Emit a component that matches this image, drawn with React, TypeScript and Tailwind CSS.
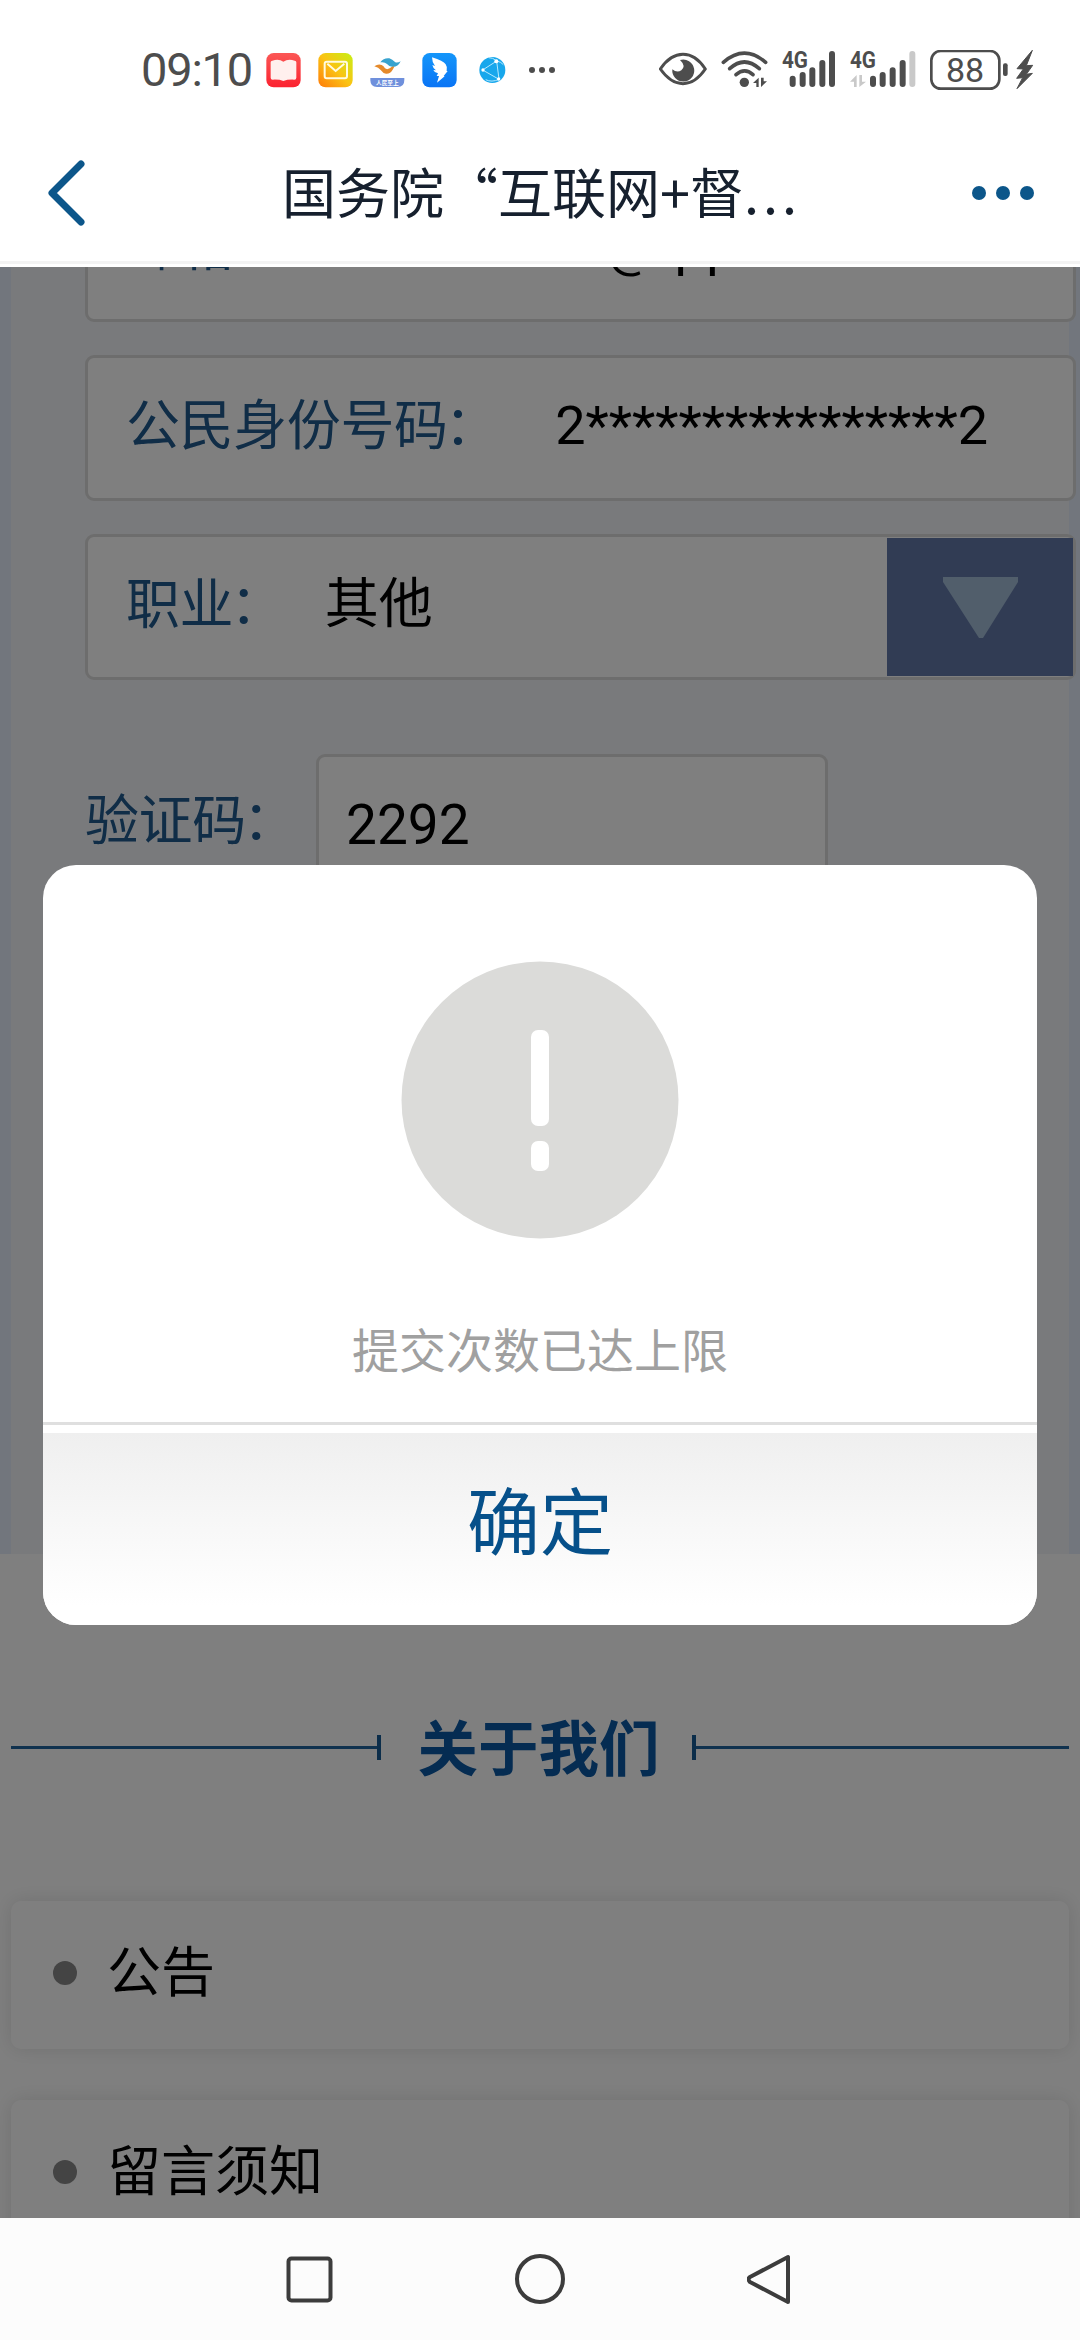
import * as React from "react"
import { clsx } from "clsx"

interface FieldProps {
  label: string
  value: string
  valueClassName?: string
  children?: React.ReactNode
}

const NOTICES: ReadonlyArray<string> = ["公告", "留言须知"]

function AppIcons() {
  return (
    <div className="flex h-10 items-center">
      {/* Reader */}
      <svg className="ml-4 h-10 w-[35px] shrink-0" viewBox="437 60 105 120">
        <defs>
          <linearGradient id="reader" x1="0" y1="0" x2="0" y2="1">
            <stop offset="0" stopColor="#fb5755" />
            <stop offset="1" stopColor="#fb2230" />
          </linearGradient>
        </defs>
        <rect x="438" y="69" width="103" height="103" rx="22" fill="url(#reader)" />
        <path
          d="M451 97q0-5 5-5 20-6 33 3 14-9 34-3 5 0 5 5v46q0 6-6 6-20-1-33 4-12-5-32-4-6 0-6-6z"
          fill="#fff0ee"
        />
      </svg>
      {/* Mail */}
      <svg className="ml-[17px] h-10 w-[35px] shrink-0" viewBox="592 60 105 120">
        <defs>
          <linearGradient id="mail" x1="0" y1="1" x2="1" y2="0">
            <stop offset="0" stopColor="#ff7a08" />
            <stop offset="0.5" stopColor="#fbc313" />
            <stop offset="1" stopColor="#c6f015" />
          </linearGradient>
        </defs>
        <rect x="593" y="69" width="103" height="103" rx="22" fill="url(#mail)" />
        <rect x="612" y="95" width="67" height="50" rx="6" fill="none" stroke="#fffbe0" strokeWidth="6" />
        <path d="M620 101l25 22 26-22" fill="none" stroke="#fffbe0" strokeWidth="6" />
      </svg>
      {/* Government services */}
      <svg className="ml-[17px] h-10 w-[35px] shrink-0" viewBox="749 60 105 120">
        <path d="M780 97q10-14 27-12 9 3 17 11 6 4 17-2-8 17-23 17-11 0-18-9-7-7-20-5z" fill="#38a3cf" />
        <path d="M762 109q12-9 22-4 6 3 10 10 6 5 14 0 6-6 14-5l-5 9q-7 13-20 12-9-1-16-11-6-8-19-11z" fill="#e58a2b" />
        <path d="M750 144h102v6q0 21-20 21h-62q-20 0-20-21z" fill="#6f90dc" />
        <text
          x="801"
          y="165"
          textAnchor="middle"
          fontSize="17"
          fontWeight="700"
          fill="#fff"
          fontFamily="Noto Sans CJK SC, sans-serif"
        >
          人民至上
        </text>
      </svg>
      {/* Wing */}
      <svg className="ml-[17px] h-10 w-[35px] shrink-0" viewBox="904 60 105 120">
        <defs>
          <linearGradient id="wing" x1="0" y1="0" x2="0" y2="1">
            <stop offset="0" stopColor="#1496fa" />
            <stop offset="1" stopColor="#0a74f5" />
          </linearGradient>
        </defs>
        <rect x="905" y="69" width="103" height="103" rx="22" fill="url(#wing)" />
        <path
          d="M934 82q34 11 41 21 6 8 3 20h3l-12 15 3 1-23 19 6-20h-7l4-8q-11-2-14-10l8 1q-10-8-11-16l8 3q-9-11-9-26z"
          fill="#fff"
        />
      </svg>
      {/* Globe */}
      <svg className="ml-[22px] h-10 w-[27px] shrink-0" viewBox="1073 60 81 120">
        <circle cx="1113" cy="120" r="39" fill="#18a7ec" />
        <g fill="none" stroke="#b5e9ff" strokeWidth="3">
          <path d="M1084 120l42-27 7 55zM1126 93q-12-11-24-10M1126 93q14 3 20 11M1133 148q-22 10-40 1" />
        </g>
        <g fill="#fff">
          <circle cx="1085" cy="120" r="5" />
          <circle cx="1125" cy="94" r="6" />
          <circle cx="1132" cy="147" r="5" />
        </g>
      </svg>
      <svg className="ml-[23px] h-10 w-[26px] shrink-0" viewBox="1224 60 78 120" fill="#4d4d4d">
        <circle cx="1233" cy="120" r="9" />
        <circle cx="1263" cy="120" r="9" />
        <circle cx="1293" cy="120" r="9" />
      </svg>
    </div>
  )
}

function NetworkLabel({ x }: { x: number }) {
  return (
    <text
      x={x}
      y="115"
      fontSize="72"
      fontWeight="700"
      fill="#4d4d4d"
      textLength="78"
      lengthAdjust="spacingAndGlyphs"
      fontFamily="Roboto, sans-serif"
    >
      4G
    </text>
  )
}

function SystemIcons() {
  return (
    <div className="flex h-10 items-center">
      <svg className="h-10 w-12 shrink-0" viewBox="53 60 144 120">
        <path
          d="M57 117Q87 73 125 73t67 44q-30 44-67 44t-68-44z"
          fill="none"
          stroke="#4d4d4d"
          strokeWidth="9"
          strokeLinejoin="round"
        />
        <path d="M116 90a33 33 0 1 1-23 28q14 12 27 3 15-13-4-31z" fill="#4d4d4d" />
      </svg>
      <svg className="ml-[14px] h-10 w-[47px] shrink-0" viewBox="240 60 141 120">
        <g fill="none" stroke="#4d4d4d" strokeWidth="11" strokeLinecap="round">
          <path d="M247 97q63-55 127 0" />
          <path d="M266 116q44-40 89 0" />
          <path d="M285 134q26-23 51 0" />
        </g>
        <circle cx="310" cy="157" r="14" fill="#4d4d4d" />
        <path d="M336 159l17-16v28h-7v-12zM378 154l-18 17v-28h8v11z" fill="#4d4d4d" />
      </svg>
      <svg className="ml-[14px] h-10 w-[54px] shrink-0 overflow-visible" viewBox="424 60 162 120">
        <NetworkLabel x={424} />
        <g stroke="#4d4d4d" strokeWidth="18" strokeLinecap="round">
          <path d="M456 146v16M486 135v27M515 121v41M545 99v63M574 72v90" />
        </g>
      </svg>
      <svg className="ml-[14px] h-10 w-[66px] shrink-0 overflow-visible" viewBox="628 60 198 120">
        <NetworkLabel x={628} />
        <path d="M628 155l20-20v36h-8v-16zM676 155l-20 16v-36h8v20z" fill="#c9c9c9" />
        <g stroke="#4d4d4d" strokeWidth="18" strokeLinecap="round">
          <path d="M697 146v16M726 135v27M756 121v41M786 99v63" />
        </g>
        <path d="M815 72v90" stroke="#c9c9c9" strokeWidth="18" strokeLinecap="round" />
      </svg>
      <svg className="ml-[14px] h-10 w-[104px] shrink-0" viewBox="867 58 312 120">
        <rect x="871" y="61" width="204" height="113" rx="28" fill="none" stroke="#4d4d4d" strokeWidth="8" />
        <rect x="1086" y="98" width="14" height="38" rx="6" fill="#4d4d4d" />
        <text
          x="972"
          y="153"
          textAnchor="middle"
          fontSize="102"
          fill="#4d4d4d"
          fontFamily="Roboto, sans-serif"
        >
          88
        </text>
        <path
          d="M1174 59l-46 55 19 1-20 28 18-2-17 33 46-46-18 3 19-27-19 1z"
          fill="#4d4d4d"
          stroke="#4d4d4d"
          strokeWidth="3"
        />
      </svg>
    </div>
  )
}

function StatusBar() {
  return (
    <div className="flex h-[140px] shrink-0 items-center justify-between pr-[46px] pl-[141px]">
      <div className="flex items-center">
        <span className="w-[109px] font-[Roboto,sans-serif] text-[47px] leading-10 tracking-[-1.2px] whitespace-nowrap text-[#4d4d4d]">
          09:10
        </span>
        <AppIcons />
      </div>
      <SystemIcons />
    </div>
  )
}

function TitleBar() {
  return (
    <header className="flex h-[127px] shrink-0 flex-col">
      <div className="flex h-[106px] items-center justify-between pr-[46px] pl-[45px]">
        <svg className="h-[68px] w-[42px]" viewBox="0 0 42 68">
          <path
            d="M36 5L7 34l29 29"
            fill="none"
            stroke="#0c568a"
            strokeWidth="7"
            strokeLinecap="round"
            strokeLinejoin="round"
          />
        </svg>
        <h1 className="mb-[5px] ml-6 flex h-[54px] items-center text-[54px] leading-[54px] whitespace-nowrap text-[#16202e]">
          <span>国务院“互联网+督</span>
          <span className="tracking-[4px]">...</span>
        </h1>
        <div className="flex gap-[10px]">
          <span className="size-[14px] rounded-full bg-[#0c568a]" />
          <span className="size-[14px] rounded-full bg-[#0c568a]" />
          <span className="size-[14px] rounded-full bg-[#0c568a]" />
        </div>
      </div>
      <div className="mt-[15px] h-[3px] bg-[#f3f3f3]" />
    </header>
  )
}

// The colon sits closer to the text than its full-width cell would put it
function FieldLabel({ children }: { children: string }) {
  return (
    <span className="flex text-[54px] leading-[54px] tracking-[-0.4px] text-[#205a8e]">
      <span>{children}</span>
      <span className="-ml-[3px]">：</span>
    </span>
  )
}

function Field({ label, value, valueClassName, children }: FieldProps) {
  return (
    <div className="flex h-[146px] w-[991px] shrink-0 rounded-[9px] border-[3px] border-[#dadada] bg-white">
      <div className="flex h-[132px] flex-1 items-center pl-[38px] text-[54px] leading-none">
        <div className="pb-1">
          <FieldLabel>{label}</FieldLabel>
        </div>
        <span
          className={clsx(
            "pt-1 font-[Roboto,'Noto_Sans_CJK_SC',sans-serif] text-black",
            valueClassName ?? "ml-[41px]"
          )}
        >
          {value}
        </span>
      </div>
      {children}
    </div>
  )
}

function AboutHeading() {
  return (
    <div className="flex h-[60px] items-center px-[11px] pt-px">
      <span className="h-[3px] w-[366px] bg-[#20659f]" />
      <span className="h-[25px] w-1 bg-[#175a94]" />
      <h2 className="w-[311px] pb-[6px] pl-1 text-center text-[60.5px] leading-[60px] font-bold text-[#0a58a4]">
        关于我们
      </h2>
      <span className="h-[25px] w-1 bg-[#175a94]" />
      <span className="h-[3px] flex-1 bg-[#20659f]" />
    </div>
  )
}

function LimitDialog() {
  return (
    <div
      role="alertdialog"
      className="flex h-[760px] w-[994px] flex-col items-center overflow-hidden rounded-[33px] bg-white"
    >
      <svg className="mt-24 size-[278px] shrink-0" viewBox="0 0 278 278">
        <circle cx="139" cy="139" r="138.5" fill="#dbdbd9" />
        <rect x="130" y="69" width="18" height="96" rx="7" fill="#fff" />
        <rect x="130" y="180" width="18" height="30" rx="7" fill="#fff" />
      </svg>
      <p className="mt-[84px] text-[47px] leading-[50px] text-[#a0a0a0]">提交次数已达上限</p>
      <div className="mt-[49px] h-[3px] w-full shrink-0 bg-[#dfdfdf]" />
      <button
        type="button"
        className="mt-2 w-full flex-1 bg-linear-to-b from-[#efefef] to-white to-90% pb-6 text-[73px] leading-none text-[#06508a]"
      >
        确定
      </button>
    </div>
  )
}

function NavigationBar() {
  return (
    <nav className="flex h-[122px] shrink-0 items-center justify-center gap-[181px] bg-[#fcfcfc]">
      <svg className="size-[52px]" viewBox="0 0 52 52" fill="none" stroke="#3c3c3c" strokeWidth="4">
        <rect x="7.5" y="5.5" width="42" height="42" rx="3" />
      </svg>
      <svg className="size-[52px]" viewBox="0 0 52 52" fill="none" stroke="#3c3c3c" strokeWidth="4">
        <circle cx="26" cy="26" r="23" />
      </svg>
      <svg className="size-[52px]" viewBox="0 0 52 52" fill="none" stroke="#3c3c3c" strokeWidth="4">
        <path d="M41 4v45L3 29q-3-3 0-5z" strokeLinejoin="round" />
      </svg>
    </nav>
  )
}

export default function App() {
  return (
    <div className="flex h-[2340px] w-[1080px] flex-col overflow-hidden bg-white font-['Noto_Sans_CJK_SC',sans-serif]">
      <StatusBar />
      <TitleBar />
      <main className="relative flex h-[1951px] shrink-0 flex-col overflow-hidden">
        <section className="h-[1287px] shrink-0 overflow-hidden bg-[linear-gradient(to_right,#e5edfa_11px,#f3f5f9_11px,#f3f5f9_1069px,#e5edfa_1069px)]">
          <div className="-mt-[91px] ml-[85px] flex w-[991px] flex-col gap-[33px]">
            <Field
              label="邮箱"
              value="611888116@qq.com"
              valueClassName="ml-[41px] tracking-[1px]"
            />
            <Field label="公民身份号码" value="2****************2" valueClassName="ml-[57px]" />
            <Field label="职业" value="其他">
              <div className="mt-px flex h-[138px] w-[186px] items-center justify-center bg-[#6278a8]">
                <svg className="h-[61px] w-[75px]" viewBox="0 0 75 61">
                  <path d="M0 0h75v5L40 61h-4L0 5z" fill="#a2bcd6" />
                </svg>
              </div>
            </Field>
          </div>
          <div className="mt-[74px] ml-[85px] flex">
            <div className="w-[231px] pt-9">
              <FieldLabel>验证码</FieldLabel>
            </div>
            <div className="h-[146px] w-[512px] rounded-[9px] border-[3px] border-[#dadada] bg-white pt-[38px] pl-[27px] font-[Roboto,sans-serif] text-[55px] leading-[60px] text-black">
              2292
            </div>
          </div>
        </section>

        <section className="flex flex-col pt-[163px]">
          <AboutHeading />
          <ul className="mx-[11px] mt-[124px] flex flex-col gap-[51px]">
            {NOTICES.map((notice) => (
              <li
                key={notice}
                className="flex h-[148px] items-center rounded-[10px] bg-white pb-1 pl-[42px] shadow-[0_0_20px_rgba(0,0,0,0.12)]"
              >
                <span className="size-6 rounded-full bg-[#888]" />
                <span className="ml-[30px] pb-2 text-[54px] leading-[54px] text-black">{notice}</span>
              </li>
            ))}
          </ul>
        </section>

        <div className="absolute inset-0 flex items-start justify-center bg-black/50 pt-[598px]">
          <LimitDialog />
        </div>
      </main>
      <NavigationBar />
    </div>
  )
}
